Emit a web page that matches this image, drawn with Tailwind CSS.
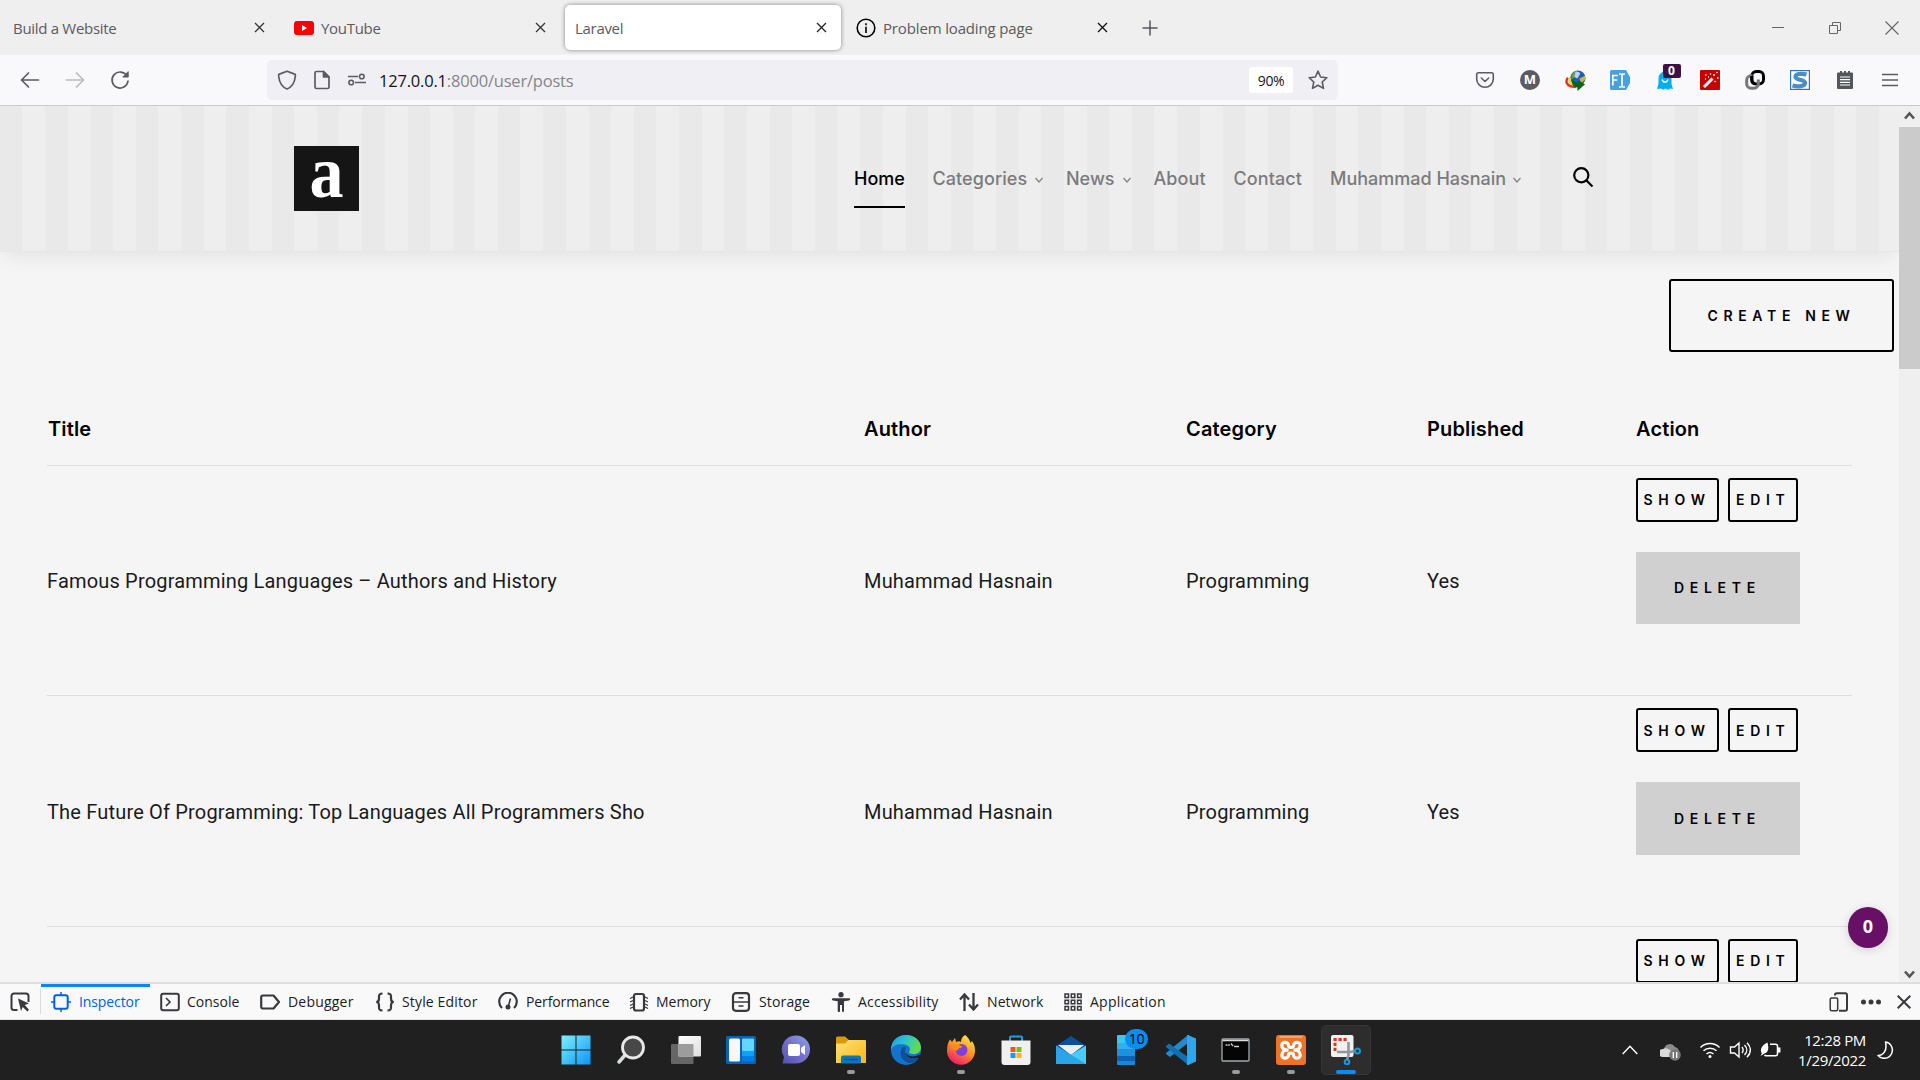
<!DOCTYPE html>
<html lang="en">
<head>
<meta charset="utf-8">
<title>Laravel</title>
<script src="https://cdn.jsdelivr.net/npm/@tailwindcss/browser@4"></script>
</head>
<body class="w-[1920px] h-[1080px] overflow-hidden bg-[#f5f5f5] flex flex-col font-['Open_Sans','Noto_Sans',sans-serif]">

<!-- Tab strip -->
<div class="h-[55px] shrink-0 bg-[#efefef] flex items-start pt-[5px] pl-[2px] text-[15px] tracking-[-0.3px] text-[#5b5b5e]">
  <div class="w-[282px] h-[45px] flex items-center pl-[11px]">
    <span class="grow pt-[2px]">Build a Website</span>
    <svg class="w-[11px] h-[11px] mr-[19px]" viewBox="0 0 11 11" stroke="#333" stroke-width="1.3" fill="none"><path d="M1 1l9 9M10 1l-9 9"/></svg>
  </div>
  <div class="w-[281px] h-[45px] flex items-center pl-[10px]">
    <svg class="w-5 h-[14px] mr-[7px]" viewBox="0 0 20 14"><rect width="20" height="14" rx="3" fill="#f00"/><path d="M8 4l5 3-5 3z" fill="#fff"/></svg>
    <span class="grow pt-[2px]">YouTube</span>
    <svg class="w-[11px] h-[11px] mr-[19px]" viewBox="0 0 11 11" stroke="#333" stroke-width="1.3" fill="none"><path d="M1 1l9 9M10 1l-9 9"/></svg>
  </div>
  <div class="w-[276px] mr-1 h-[45px] flex items-center pl-[10px] bg-white rounded-[5px] shadow-[0_0_4px_rgba(0,0,0,0.45)]">
    <span class="grow pt-[2px]">Laravel</span>
    <svg class="w-[11px] h-[11px] mr-[14px]" viewBox="0 0 11 11" stroke="#222" stroke-width="1.3" fill="none"><path d="M1 1l9 9M10 1l-9 9"/></svg>
  </div>
  <div class="w-[282px] h-[45px] flex items-center pl-[11px]">
    <svg class="w-5 h-5 mr-[7px]" viewBox="0 0 20 20" fill="none" stroke="#000" stroke-width="1.6"><circle cx="10" cy="10" r="8.8"/><path d="M10 8.7V15M10 5.2v2"/></svg>
    <span class="grow pt-[2px] tracking-[-0.15px]">Problem loading page</span>
    <svg class="w-[11px] h-[11px] mr-[19px]" viewBox="0 0 11 11" stroke="#111" stroke-width="1.3" fill="none"><path d="M1 1l9 9M10 1l-9 9"/></svg>
  </div>
  <div class="w-[46px] h-[45px] flex items-center justify-center"><svg class="w-4 h-4" viewBox="0 0 16 16" stroke="#55555f" stroke-width="1.5"><path d="M8 .5v15M.5 8h15"/></svg></div>
  <div class="ml-auto flex h-[45px] items-center">
    <div class="w-[57px] flex justify-center"><svg class="w-3 h-3" viewBox="0 0 12 12" stroke="#666"><path d="M0 5.500h12"/></svg></div>
    <div class="w-[57px] flex justify-center"><svg class="w-3 h-3" viewBox="0 0 12 12" stroke="#666" fill="none"><path d="M.5 3.500h8v8h-8zM3.500 3.500v-3h8v8h-3"/></svg></div>
    <div class="w-[57px] flex justify-center"><svg class="w-[14px] h-[14px]" viewBox="0 0 14 14" stroke="#666" fill="none" stroke-width="1.1"><path d="M.5.5l13 13M13.500.5l-13 13"/></svg></div>
  </div>
</div>

<!-- Navigation toolbar -->
<div class="h-[51px] shrink-0 bg-[#f9f9fb] border-b border-[#c9c9cc] flex items-center">
  <div class="flex w-[267px] pl-[7.5px]">
    <div class="w-[45px] flex justify-center"><svg class="w-5 h-5" viewBox="0 0 20 20" fill="none" stroke="#5b5b66" stroke-width="1.7" stroke-linecap="round" stroke-linejoin="round"><path d="M18.500 10H1.500M8.500 3L1.500 10l7 7"/></svg></div>
    <div class="w-[45px] flex justify-center"><svg class="w-5 h-5" viewBox="0 0 20 20" fill="none" stroke="#bcbcc1" stroke-width="1.7" stroke-linecap="round" stroke-linejoin="round"><path d="M1.500 10h17M11.500 3l7 7-7 7"/></svg></div>
    <div class="w-[45px] flex justify-center"><svg class="w-5 h-5" viewBox="0 0 20 20" fill="none" stroke="#5b5b66" stroke-width="1.7" stroke-linecap="round"><path d="M17 6A8 8 0 1 0 18 11"/><path d="M18.200 2v5h-5z" fill="#5b5b66" stroke-linejoin="round" stroke-width="1"/></svg></div>
  </div>
  <div class="w-[1071px] h-10 rounded-[5px] bg-[#f0f0f4] flex items-center">
    <svg class="w-5 h-5 ml-[10px]" viewBox="0 0 20 20" fill="none" stroke="#5b5b66" stroke-width="1.7" stroke-linejoin="round"><path d="M10 1.200l7.600 2.900c.9 0 .8 1 .7 2.400C17.700 12 15 17 10 19 5 17 2.300 12 1.700 6.500c-.1-1.400-.2-2.400.7-2.400z"/></svg>
    <svg class="w-5 h-5 ml-[15px]" viewBox="0 0 20 20" fill="none" stroke="#5b5b66" stroke-width="1.7" stroke-linejoin="round"><path d="M11.500 1.500H4.500a1.500 1.500 0 0 0-1.500 1.500v14a1.500 1.500 0 0 0 1.500 1.500h11A1.500 1.500 0 0 0 17 17V7z"/><path d="M11.500 1.500V7H17z" fill="#5b5b66"/></svg>
    <svg class="w-5 h-5 ml-[15px]" viewBox="0 0 20 20" fill="none" stroke="#5b5b66" stroke-width="1.6"><path d="M1 6.500h10M8 12.500h11"/><circle cx="14.800" cy="6.500" r="2.300"/><circle cx="4.200" cy="12.500" r="2.300"/></svg>
    <div class="ml-[12px] pt-[3px] text-[16.500px] tracking-[-0.2px] text-[#85858b]"><span class="text-[#15141a]">127.0.0.1</span>:8000/user/posts</div>
    <div class="ml-auto w-11 h-[26px] rounded-[3px] bg-white flex items-center justify-center pt-px text-[14px] tracking-[-0.4px] text-[#15141a]">90%</div>
    <svg class="w-5 h-5 ml-[15px] mr-[10px]" viewBox="0 0 20 20" fill="none" stroke="#5b5b66" stroke-width="1.6" stroke-linejoin="round"><path d="M10 1.200l2.600 5.800 6.300.7-4.700 4.300 1.300 6.400L10 15.200l-5.500 3.200 1.300-6.400L1.100 7.700l6.300-.7z"/></svg>
  </div>
  <div class="flex ml-auto pr-[7.5px] items-center">
    <div class="w-[45px] flex justify-center"><svg class="w-5 h-5" viewBox="0 0 20 20" fill="none" stroke="#5b5b66" stroke-width="1.6" stroke-linecap="round" stroke-linejoin="round"><path d="M3.500 2.800h13a1.800 1.800 0 0 1 1.800 1.800V9a8.300 8.300 0 0 1-16.600 0V4.600a1.800 1.800 0 0 1 1.800-1.800z"/><path d="M6.300 8L10 11.500 13.700 8"/></svg></div>
    <div class="w-[45px] flex justify-center"><div class="w-5 h-5 rounded-full bg-[#5b5b66] text-white text-[13px] font-bold flex items-center justify-center">M</div></div>
    <div class="w-[45px] flex justify-center"><svg class="w-[21px] h-[21px]" viewBox="0 0 22 22"><circle cx="13.500" cy="8.500" r="8" fill="#2857b8"/><path d="M10 2c3-1 5 0 6 2l-3 5-4-2z" fill="#b9d4ee"/><path d="M7 4l4-2-1 5-3 3z" fill="#67a53a"/><path d="M15 9l6-3v4l-4 4z" fill="#c8b83c"/><path d="M3 8c-3 4-1 8 3 9l6 1" stroke="#e52c20" stroke-width="2.500" fill="none"/><path d="M5.500 8c-2 4 0 6 3 7l4 1" stroke="#f5d12c" stroke-width="2.500" fill="none"/><path d="M8 9c0 3 3 4 6 4V11l7 4-8 7v-4C8 18 6 14 8 9z" fill="#0a6418"/></svg></div>
    <div class="w-[45px] flex justify-center"><svg class="w-5 h-5" viewBox="0 0 20 20"><path d="M1.500 0H16l4 7v6l-4 7H1.500A1.500 1.500 0 0 1 0 18.500v-17A1.500 1.500 0 0 1 1.500 0z" fill="#45a1e3"/><path d="M2.800 15.500v-10h5M2.800 10h4.500M9 4h2l1 1 1-1h2M9 17h2l1-1 1 1h2M12 5v11" stroke="#fff" stroke-width="1.700" fill="none"/></svg></div>
    <div class="w-[45px] flex justify-center relative"><svg class="w-5 h-5" viewBox="0 0 20 20"><path d="M3.500 14V8a6.500 6.500 0 0 1 13 0v6l1.500 5-3-.5-2 1.200-2.500-1.200-2.500 1.200-2-1.200-4 .5z" fill="#00aef0"/><path d="M7 9.500c1 3.500 5 3.500 6 0" stroke="#fff" stroke-width="1.300" fill="none"/></svg>
      <div class="absolute left-[20px] -top-[6px] w-[18px] h-[14px] rounded-[2px] bg-[#3d1145] text-white text-[12px] leading-[13px] font-bold text-center">0</div></div>
    <div class="w-[45px] flex justify-center"><svg class="w-5 h-5" viewBox="0 0 20 20"><rect width="20" height="20" rx="1" fill="#c70000"/><path d="M4 17l8.500-8.500" stroke="#fff" stroke-width="3"/><path d="M14 4v2M17 8h1.500M10 3.500l1 1M5 5h1.500M16.500 3l1-1M8 7h1M14.500 11l1 1M5 9h1" stroke="#fff" stroke-width="1.300"/></svg></div>
    <div class="w-[45px] flex justify-center"><svg class="w-5 h-5" viewBox="0 0 20 20" fill="none" stroke-width="3"><rect x="6.800" y="1.500" width="11.700" height="12.500" rx="4.500" stroke="#000"/><path d="M7.500 5.800H6A4.300 4.300 0 0 0 1.700 10v4A4.300 4.300 0 0 0 6 18.300h3a4.300 4.300 0 0 0 4.300-4.300V9.500" stroke="#777"/><path d="M6.800 6v4a4 4 0 0 0 3 3.800" stroke="#000"/></svg></div>
    <div class="w-[45px] flex justify-center"><svg class="w-5 h-5" viewBox="0 0 20 20"><rect x=".6" y=".6" width="18.800" height="18.800" fill="#fff" stroke="#3874ab" stroke-width="1.200"/><path d="M16.500 4.500C11 3 5 4 5.500 7c.5 3.500 9.500 2 9.500 6 0 3.500-7 4-12.500 2.500" stroke="#4a8ec6" stroke-width="4.200" fill="none"/></svg></div>
    <div class="w-[45px] flex justify-center"><svg class="w-5 h-5" viewBox="0 0 20 20"><path d="M3 2.500h2V1h2v1.500h2V1h2v1.500h2V1h2v1.500h2a1 1 0 0 1 1 1V18a1 1 0 0 1-1 1H3a1 1 0 0 1-1-1V3.500a1 1 0 0 1 1-1z" fill="#55555f"/><path d="M5 7h10M5 9.700h10M5 12.400h10M5 15h10" stroke="#fff" stroke-width="1.200"/></svg></div>
    <div class="w-[45px] flex justify-center"><svg class="w-[16px] h-4" viewBox="0 0 16 16" stroke="#5b5b66" stroke-width="1.400"><path d="M0 2.500h16M0 8h16M0 13.500h16"/></svg></div>
  </div>
</div>

<!-- Page viewport -->
<div class="h-[876px] shrink-0 flex overflow-hidden">
  <main class="w-[1899px] h-[876px] overflow-hidden relative">
    <header class="h-[146px] border-b border-[#e7e7e7] bg-[repeating-linear-gradient(90deg,#e9e9e9_0,#e9e9e9_22.4px,#eeeeee_22.4px,#eeeeee_45.280px)] shadow-[0_8px_20px_-4px_rgba(0,0,0,0.08)] flex">
      <svg class="w-[65px] h-[65px] ml-[293.500px] mt-10 overflow-visible" viewBox="0 0 65 65"><rect width="65" height="65" fill="#151515"/><text x="15.500" y="50.500" font-family="Liberation Serif" font-weight="700" font-size="74" fill="#fff" textLength="34" lengthAdjust="spacingAndGlyphs">a</text></svg>
      <nav class="ml-[495.500px] mt-[59px] flex font-['Inter',sans-serif] font-medium text-[18px] leading-7 text-[#7b7b7b]">
        <div class="w-[78.500px]"><span class="inline-block text-black border-b-2 border-black h-[43px]">Home</span></div>
        <div class="w-[133.500px] flex gap-[8px]"><span class="tracking-[0.070px]">Categories</span> <svg class="w-[8px] h-[8px] mt-[11px]" viewBox="0 0 8 8" fill="none" stroke="#858585" stroke-width="1.300"><path d="M.5 2L4 6l3.500-4"/></svg></div>
        <div class="w-[87.500px] flex gap-[8px]">News <svg class="w-[8px] h-[8px] mt-[11px]" viewBox="0 0 8 8" fill="none" stroke="#858585" stroke-width="1.300"><path d="M.5 2L4 6l3.500-4"/></svg></div>
        <div class="w-[80px] tracking-[0.100px]">About</div>
        <div class="w-[96.500px] tracking-[0.100px]">Contact</div>
        <div class="w-[242.500px] flex gap-[7px]">Muhammad Hasnain <svg class="w-[8px] h-[8px] mt-[11px]" viewBox="0 0 8 8" fill="none" stroke="#858585" stroke-width="1.300"><path d="M.5 2L4 6l3.500-4"/></svg></div>
        <svg class="w-5 h-5 mt-[2px]" viewBox="0 0 20 20" fill="none" stroke="#000" stroke-width="2.200"><circle cx="8.300" cy="8.300" r="7.100"/><path d="M13.500 13.500l6 6"/></svg>
      </nav>
    </header>

    <div class="flex justify-end pr-[5px] pt-[27px] font-['Inter',sans-serif]">
      <a class="w-[225px] h-[73px] border-2 border-black rounded-[3px] flex items-center pl-[36.500px] text-[14px] font-semibold tracking-[5.650px] whitespace-nowrap">CREATE NEW</a>
    </div>

    <div class="ml-[47px] w-[1805px]">
      <div class="h-[114px] pl-px pt-[62px] border-b border-[#dedede] grid grid-cols-[816px_322px_241px_209px_1fr] font-['Inter',sans-serif] font-semibold text-[20px] tracking-[0.150px] leading-[30px] text-black">
        <div>Title</div><div>Author</div><div>Category</div><div>Published</div><div>Action</div>
      </div>
      <div class="h-[230px] pl-px border-b border-[#dedede] grid grid-cols-[816px_322px_241px_209px_1fr] items-center font-['Roboto',sans-serif] text-[20px] tracking-[0.180px] text-[#1a1a1a]">
        <div class="-ml-px">Famous Programming Languages – Authors and History</div><div>Muhammad Hasnain</div><div>Programming</div><div>Yes</div>
        <div class="self-start pt-3 font-['Inter',sans-serif] font-semibold text-[14px] tracking-[5.700px] text-black">
          <div class="flex gap-[9px]"><a class="w-[83px] h-11 border-2 border-black rounded-[3px] pl-[5.500px] pb-[2px] flex items-center">SHOW</a><a class="w-[70px] h-11 border-2 border-black rounded-[3px] pl-[6px] pb-[2px] flex items-center">EDIT</a></div>
          <div class="mt-[30px] w-[164px] h-[72px] bg-[#d0d0d0] pl-[38px] pb-[2px] flex items-center">DELETE</div>
        </div>
      </div>
      <div class="h-[231px] pl-px border-b border-[#dedede] grid grid-cols-[816px_322px_241px_209px_1fr] items-center font-['Roboto',sans-serif] text-[20px] tracking-[0.180px] text-[#1a1a1a]">
        <div class="-ml-px pt-[2px]">The Future Of Programming: Top Languages All Programmers Sho</div><div class="pt-[2px]">Muhammad Hasnain</div><div class="pt-[2px]">Programming</div><div class="pt-[2px]">Yes</div>
        <div class="self-start pt-3 font-['Inter',sans-serif] font-semibold text-[14px] tracking-[5.700px] text-black">
          <div class="flex gap-[9px]"><a class="w-[83px] h-11 border-2 border-black rounded-[3px] pl-[5.500px] flex items-center">SHOW</a><a class="w-[70px] h-11 border-2 border-black rounded-[3px] pl-[6px] flex items-center">EDIT</a></div>
          <div class="mt-[30px] w-[164px] h-[73px] bg-[#d0d0d0] pl-[38px] flex items-center">DELETE</div>
        </div>
      </div>
      <div class="pl-[1589px] pt-3 font-['Inter',sans-serif] font-semibold text-[14px] tracking-[5.700px] text-black">
        <div class="flex gap-[9px]"><a class="w-[83px] h-11 border-2 border-black rounded-[3px] pl-[5.500px] pb-[2px] flex items-center">SHOW</a><a class="w-[70px] h-11 border-2 border-black rounded-[3px] pl-[6px] pb-[2px] flex items-center">EDIT</a></div>
      </div>
    </div>

    <!-- Floating tracker counter -->
    <div class="absolute left-[1848px] top-[801px] w-10 h-[41px] rounded-full bg-[#671066] shadow-[0_2px_10px_rgba(0,0,0,0.15)] text-white font-bold text-[18px] flex items-center justify-center pb-[2px]">0</div>
  </main>
  <div class="w-[21px] bg-[#efefef] flex flex-col">
    <div class="h-[21px] flex items-center justify-center pb-[2px]"><svg class="w-[11px] h-[9px]" viewBox="0 0 11 9" fill="none" stroke="#555" stroke-width="2.600"><path d="M1 7.500L5.500 2.500 10 7.500"/></svg></div>
    <div class="h-[242px] bg-[#cbcbcb]"></div>
    <div class="mt-auto h-[18px] flex items-start pt-[6px] justify-center"><svg class="w-[11px] h-[9px]" viewBox="0 0 11 9" fill="none" stroke="#555" stroke-width="2.600"><path d="M1 1.500L5.500 6.500 10 1.500"/></svg></div>
  </div>
</div>

<!-- Developer tools bar -->
<div class="h-[38px] shrink-0 bg-[#f9f9fa] border-t-2 border-b border-t-[#dededf] border-b-[#e0e0e2] flex text-[14px] tracking-[0px] text-[#1c1c20] whitespace-nowrap">
  <div class="w-[41px] flex items-center justify-center pr-[2px] relative"><svg class="w-5 h-5" viewBox="0 0 20 20" fill="none" stroke="#38383d" stroke-width="2"><path d="M7.500 18H4a2.500 2.500 0 0 1-2.500-2.500V4A2.500 2.500 0 0 1 4 1.500h12A2.500 2.500 0 0 1 18.500 4v6"/><path d="M8 6.500l11 5-4.200 1.600 4.200 4.700-1.700 1.700-4.500-4.500L11 19z" fill="#38383d" stroke="none"/></svg><div class="absolute right-0 top-[5px] w-px h-[25px] bg-[#dcdcde]"></div></div>
  <div class="w-[109px] border-t-[3px] border-[#0a84ff] pb-[3px] text-[#0060df] flex items-center pl-[10px] gap-2"><svg class="w-5 h-5" viewBox="0 0 20 20" fill="none" stroke="#0060df" stroke-width="2"><rect x="3.300" y="3.300" width="13.400" height="13.400" rx="2"/><path d="M10 0v3M10 17v3M0 10h3M17 10h3" stroke-width="1.500"/></svg><span class="tracking-[-0.100px]">Inspector</span></div>
  <div class="w-[100px] flex items-center pl-[10px] gap-[7px]"><svg class="w-5 h-5" viewBox="0 0 20 20" fill="none" stroke="#38383d" stroke-width="2"><rect x="1.200" y="1.700" width="17.600" height="16.600" rx="2"/><path d="M6 6l4 4-4 4" stroke-width="1.600"/></svg>Console</div>
  <div class="w-[115px] flex items-center pl-[10px] gap-2"><svg class="w-5 h-5" viewBox="0 0 20 20" fill="none" stroke="#38383d" stroke-width="2.200" stroke-linejoin="round"><path d="M3 3.500h10.500L19 10l-5.500 6.500H3A1.700 1.700 0 0 1 1.200 15V5A1.700 1.700 0 0 1 3 3.500z"/></svg><span class="tracking-[0.200px]">Debugger</span></div>
  <div class="w-[123px] flex items-center pl-[10px] gap-[7px]"><svg class="w-5 h-5" viewBox="0 0 20 20" fill="none" stroke="#38383d" stroke-width="2.200"><path d="M7.500 1.500c-3 0-3.500 1-3.500 3v2c0 2-.8 3.500-2.800 3.500C3.200 10 4 11.500 4 13.500v2c0 2 .5 3 3.500 3M12.500 1.500c3 0 3.500 1 3.500 3v2c0 2 .8 3.500 2.800 3.500-2 0-2.800 1.500-2.800 3.500v2c0 2-.5 3-3.500 3"/></svg><span class="tracking-[0.150px]">Style Editor</span></div>
  <div class="w-[131px] flex items-center pl-[10px] gap-2"><svg class="w-5 h-5" viewBox="0 0 20 20" fill="none" stroke="#38383d" stroke-width="2.200"><path d="M4 16a8.800 8.800 0 1 1 12 0"/><path d="M12.500 6.500l-2 7" stroke-width="1.600"/><circle cx="10" cy="15" r="2.500" fill="#38383d" stroke="none"/></svg><span class="tracking-[-0.120px]">Performance</span></div>
  <div class="w-[102px] flex items-center pl-[10px] gap-[7px]"><svg class="w-5 h-5" viewBox="0 0 20 20" fill="none" stroke="#38383d" stroke-width="2.200"><rect x="5" y="2" width="10" height="16.500" rx="2"/><path d="M4 5l-3 1.500M4 8.500L1 10M4 12l-3 1.500M4 15l-3 1.500M16 5l3 1.500M16 8.500l3 1.500M16 12l3 1.500M16 15l3 1.500" stroke-width="1.300"/></svg>Memory</div>
  <div class="w-[100px] flex items-center pl-[10px] gap-2"><svg class="w-5 h-5" viewBox="0 0 20 20" fill="none" stroke="#38383d" stroke-width="2.200"><rect x="2" y="1.200" width="16" height="17.600" rx="3"/><path d="M2 10h16" stroke-width="1.500"/><path d="M7.500 5.800h5M7.500 14h5" stroke-width="1.600"/></svg><span class="tracking-[0.150px]">Storage</span></div>
  <div class="w-[128px] flex items-center pl-[10px] gap-[7px]"><svg class="w-5 h-5" viewBox="0 0 20 20" fill="#38383d"><circle cx="10" cy="2.700" r="2.600"/><path d="M2 6.200h16a1 1 0 0 1 0 2.300l-5 .8V19a1 1 0 0 1-2 0v-6H9v6a1 1 0 0 1-2.300 0V9.300L2 8.500a1 1 0 0 1 0-2.300z"/></svg><span class="tracking-[0.180px]">Accessibility</span></div>
  <div class="w-[104px] flex items-center pl-[10px] gap-2"><svg class="w-5 h-5" viewBox="0 0 20 20" fill="none" stroke="#38383d" stroke-width="2.300"><path d="M5.500 19V3M1 7.500L5.500 2.500 10 7.500M14.500 1v16M10 12.500l4.500 5 4.500-5"/></svg><span class="tracking-[0.100px]">Network</span></div>
  <div class="w-[114px] flex items-center pl-[10px] gap-[7px]"><svg class="w-5 h-5" viewBox="0 0 20 20" fill="none" stroke="#38383d" stroke-width="1.500"><path d="M2 2h3.500v3.500H2zM8.300 2h3.500v3.500H8.300zM14.600 2h3.500v3.500h-3.500zM2 8.300h3.500v3.500H2zM8.300 8.300h3.500v3.500H8.300zM14.600 8.300h3.500v3.500h-3.500zM2 14.600h3.500v3.500H2zM8.300 14.600h3.500v3.500H8.300zM14.600 14.600h3.500v3.500h-3.500z"/></svg><span class="tracking-[0.250px]">Application</span></div>
  <div class="ml-auto flex items-center pr-[9px]">
    <svg class="w-5 h-5" viewBox="0 0 20 20" fill="none" stroke="#38383d" stroke-width="2"><path d="M6 3.500V3a1.800 1.800 0 0 1 1.800-1.800h8.500A1.800 1.800 0 0 1 18 3v14a1.800 1.800 0 0 1-1.800 1.800H10"/><rect x="1.200" y="6" width="7.500" height="12.800" rx="1.500" stroke-width="1.500"/></svg>
    <svg class="w-5 h-5 ml-[12.500px]" viewBox="0 0 20 20" fill="#38383d"><circle cx="2.500" cy="10" r="2.500"/><circle cx="10" cy="10" r="2.500"/><circle cx="17.500" cy="10" r="2.500"/></svg>
    <svg class="w-[14px] h-[14px] ml-[16px]" viewBox="0 0 14 14" stroke="#38383d" stroke-width="2"><path d="M.7.7l12.600 12.600M13.300.7L.7 13.300"/></svg>
  </div>
</div>

<!-- Taskbar -->
<div class="h-[60px] shrink-0 bg-[#202020] flex items-center">
  <div class="w-[55px] ml-[548px] flex justify-center"><svg class="w-[30px] h-[30px]" viewBox="0 0 30 30"><defs><linearGradient id="w" x1="0" y1="0" x2="1" y2="1"><stop stop-color="#7cf0ff"/><stop offset="1" stop-color="#0d95f5"/></linearGradient></defs><path d="M.5.5H14.500v14H.5zM15.500.5h14v14h-14zM.5 15.500h14v14H.5zM15.500 15.500h14v14h-14z" fill="url(#w)"/></svg></div>
  <div class="w-[55px] flex justify-center"><svg class="w-[30px] h-[30px]" viewBox="0 0 30 30"><path d="M10 19l-7 8" stroke="#d8dde0" stroke-width="3.500" stroke-linecap="round"/><circle cx="17" cy="12.500" r="10.500" fill="#484848" stroke="#e8e8e8" stroke-width="2.800"/></svg></div>
  <div class="w-[55px] flex justify-center"><svg class="w-[30px] h-[30px]" viewBox="0 0 30 30"><defs><linearGradient id="tv" x2="1" y2="1"><stop stop-color="#fff"/><stop offset="1" stop-color="#ddd"/></linearGradient></defs><rect y="9" width="22.500" height="20" rx="1" fill="#666"/><rect x="7.500" y="1" width="22.500" height="20.500" rx="1" fill="url(#tv)"/><rect x="7.500" y="9" width="15" height="12.500" fill="#9c9c9c"/></svg></div>
  <div class="w-[55px] flex justify-center"><svg class="w-[30px] h-[30px]" viewBox="0 0 30 30"><rect y="1" width="30" height="28" rx="1.500" fill="#0c61b3"/><rect x="3" y="3.500" width="11" height="23" rx="1.500" fill="#f7f7f9"/><rect x="16" y="3.500" width="12" height="12.500" rx="1" fill="#62d6ff"/><rect x="16" y="16" width="12" height="5" fill="#0ca2fb"/><rect x="16" y="21" width="12" height="5.500" rx="1" fill="#007ee5"/></svg></div>
  <div class="w-[55px] flex justify-center"><svg class="w-[30px] h-[30px]" viewBox="0 0 30 30"><defs><linearGradient id="ch" x1="1" x2="0" y2="1"><stop stop-color="#8aa5f0"/><stop offset=".5" stop-color="#7770cc"/><stop offset="1" stop-color="#4f50b5"/></linearGradient></defs><path d="M15 .5A14 14 0 1 1 15 28.500H1.500L3 22A14 14 0 0 1 15 .5z" fill="url(#ch)"/><rect x="7" y="9" width="12" height="12" rx="2" fill="#fff"/><path d="M20 13l4-3v10l-4-3z" fill="#fff"/></svg></div>
  <div class="w-[55px] h-[60px] flex justify-center items-center relative"><svg class="w-[30px] h-[30px]" viewBox="0 0 30 30"><defs><linearGradient id="fe" x2="1" y2="1"><stop stop-color="#ffe27a"/><stop offset="1" stop-color="#f8b70e"/></linearGradient></defs><path d="M0 3a1.500 1.500 0 0 1 1.500-1.500H9L13 5v6H0z" fill="#d99a06"/><path d="M0 8.500h9L12.500 5H29a1 1 0 0 1 1 1v22H0z" fill="url(#fe)"/><path d="M5 28.500v-6a2 2 0 0 1 2-2h16a2 2 0 0 1 2 2v6z" fill="#0f74bf"/><path d="M8.500 24.500h13" stroke="#0a4f92" stroke-width="1.500"/></svg><div class="absolute bottom-[6px] w-2 h-1 rounded-full bg-[#9a9a9a]"></div></div>
  <div class="w-[55px] flex justify-center"><svg class="w-[30px] h-[30px]" viewBox="0 0 30 30"><defs><linearGradient id="ed" x2="1" y2=".4"><stop stop-color="#2196e8"/><stop offset=".5" stop-color="#2cc3d0"/><stop offset="1" stop-color="#5fdc4e"/></linearGradient></defs><circle cx="15" cy="15" r="15" fill="#1274cf"/><path d="M0 13C1 5 7 0 15 0c9 0 15 6 15 12.500 0 4-3 6.500-7 6.500-4 0-6-1-4.500-3 1.500-3-1-6-5-6.500C7 8.500 2 10 0 15z" fill="url(#ed)"/><path d="M12 12c-5 5-2 14 6 16 4 .7 8-2 10-6-5 3-13 1-14-4-1-3 0-4 1-5-1-1.500-2-1.500-3-1z" fill="#104f9c"/><path d="M15 13c-1.500 1.500-1.500 5 1 6.500 4 3 9 2 12.500 0l1.500 2v5c-4 0-3-3-3-4-5 2-12 0-13-5-.4-2 0-3.500 1-4.500z" fill="#202020"/></svg></div>
  <div class="w-[55px] h-[60px] flex justify-center items-center relative"><svg class="w-[30px] h-[30px]" viewBox="0 0 30 30"><defs><linearGradient id="ff" x1=".8" y1="0" x2=".3" y2="1"><stop stop-color="#ffe94a"/><stop offset=".45" stop-color="#ff9a20"/><stop offset="1" stop-color="#f5156c"/></linearGradient></defs><path d="M19 0c4 3 5 6 5.500 8L26 6c2 3 3 6 3 9.500A14 14 0 0 1 1 16C1 11 2 7 4 4.500L6 7l3-4 1 4c2-1 4-1 5 0 0-3 1-5 4-7z" fill="url(#ff)"/><circle cx="15.500" cy="15" r="6" fill="#7e3fe0"/><path d="M5 10c5-1 8-1 12 2-3 1-5 1-6 4-3-1-5-3-6-6z" fill="#ff8a1c"/></svg><div class="absolute bottom-[6px] w-2 h-1 rounded-full bg-[#9a9a9a]"></div></div>
  <div class="w-[55px] flex justify-center"><svg class="w-[30px] h-[30px]" viewBox="0 0 30 30"><path d="M9 6V2.500A1 1 0 0 1 10 1.500h10a1 1 0 0 1 1 1V6" fill="none" stroke="#1e9fe3" stroke-width="2"/><path d="M.5 5.500h29V27a3 3 0 0 1-3 3h-23a3 3 0 0 1-3-3z" fill="#f0f0f0"/><path d="M9.500 12h5v5h-5z" fill="#f35325"/><path d="M15.500 12h5v5h-5z" fill="#81bc06"/><path d="M9.500 18h5v5h-5z" fill="#05a6f0"/><path d="M15.500 18h5v5h-5z" fill="#ffba08"/></svg></div>
  <div class="w-[55px] flex justify-center"><svg class="w-[30px] h-[30px]" viewBox="0 0 30 30"><path d="M0 11L15 1l15 10v8H0z" fill="#0c4f9a"/><path d="M2 10h26L15 20z" fill="#eee"/><path d="M30 10.500L0 29h30z" fill="#46cbfa"/><path d="M0 10.500L30 29H0z" fill="#2aa5ea"/></svg></div>
  <div class="w-[55px] h-[60px] flex justify-center items-center relative"><svg class="w-[30px] h-[30px]" viewBox="0 0 30 30"><path d="M6 1a1 1 0 0 1 1-1h16a1 1 0 0 1 1 1v10H6z" fill="#3cc5f5"/><path d="M6 8h18v7H6z" fill="#30b1ee"/><path d="M6 14h18v8H6z" fill="#1b91df"/><path d="M6 21h18v8a1 1 0 0 1-1 1H7a1 1 0 0 1-1-1z" fill="#0c62b5"/><path d="M6 26h18v3a1 1 0 0 1-1 1H7a1 1 0 0 1-1-1z" fill="#1887da"/></svg><div class="absolute left-[27px] top-[9px] w-[23px] h-5 rounded-full bg-[#0a8cf5] text-black text-[14.500px] tracking-[-0.500px] leading-5 text-center">10</div></div>
  <div class="w-[55px] flex justify-center"><svg class="w-[30px] h-[30px]" viewBox="0 0 30 30"><path d="M22 0v8L4 22 0 19v-1z" fill="#2489ca"/><path d="M0 11l3-2.500L22 22v8L0 12z" fill="#1070b3"/><path d="M22 0l8 3.500v23L22 30c1 0 1-1 1-2V2c0-1 0-2-1-2z" fill="#2da6ee"/><path d="M21 0l2 0v30l-2 0z" fill="#2da6ee"/></svg></div>
  <div class="w-[55px] h-[60px] flex justify-center items-center relative"><svg class="w-[30px] h-[30px]" viewBox="0 0 30 30"><rect x="1" y="4" width="27" height="22" rx="1" fill="#050505" stroke="#a5abb0" stroke-width="1.300"/><path d="M1.500 5.500h26" stroke="#dcdcdc" stroke-width="1.500"/><path d="M4.500 10h2M8 9v2M10 8.500l2 2.500M13 11.500h5" stroke="#ccc" stroke-width="1.300"/></svg><div class="absolute bottom-[6px] w-2 h-1 rounded-full bg-[#9a9a9a]"></div></div>
  <div class="w-[55px] h-[60px] flex justify-center items-center relative"><svg class="w-[30px] h-[30px]" viewBox="0 0 30 30"><rect width="30" height="30" rx="3" fill="#ee7326"/><path d="M3.500 2h23" stroke="#f7b37f" stroke-width="1.500"/><path d="M12.500 15C8 15 5.800 13 5.800 10.500 5.800 6 12.500 6.500 12.500 10.500c0 2.500 5 2.500 5 0C17.500 6.500 24.200 6 24.200 10.500c0 2.500-2.200 4.500-6.700 4.500 4.500 0 6.700 2.500 6.700 5 0 4.500-6.700 4-6.700 0 0-2.500-5-2.500-5 0 0 4-6.700 4.500-6.700 0 0-2.500 2.200-5 6.700-5z" fill="none" stroke="#fff" stroke-width="3.200"/></svg><div class="absolute bottom-[6px] w-2 h-1 rounded-full bg-[#9a9a9a]"></div></div>
  <div class="w-[50px] ml-[3px] h-[50px] rounded-[5px] bg-[#2d2d2d] border border-[#363636] flex justify-center items-center relative"><svg class="w-[30px] h-[30px]" viewBox="0 0 30 30" fill="none"><rect width="22.500" height="22" rx="2" fill="#f1f1f3"/><path d="M4 16V4.500h13" stroke="#d63a13" stroke-width="3" stroke-dasharray="3.200 1.800"/><path d="M17.500 7v13l-1.500 5M6 17h13l5-1" stroke="#8f969c" stroke-width="2.600"/><circle cx="26.500" cy="16" r="2.500" stroke="#1c97dd" stroke-width="2"/><circle cx="16" cy="27" r="2.300" stroke="#1c97dd" stroke-width="2"/></svg><div class="absolute bottom-0 w-5 h-1 rounded-full bg-[#0a8cf5]"></div></div>

  <div class="ml-auto flex items-center text-white">
    <svg class="w-4 h-[10px]" viewBox="0 0 16 10" fill="none" stroke="#fff" stroke-width="1.400"><path d="M.7 9L8 1.200 15.300 9"/></svg>
    <svg class="w-[21px] h-[18px] ml-[22px] mt-1" viewBox="0 0 21 18"><path d="M4 6a6 6 0 0 1 11-2 5 5 0 0 1 4 6H4z" fill="#8c8c8c"/><path d="M3 14a4 4 0 0 1 0-8c3-2 6 0 8 2v6z" fill="#d9d9d9"/><circle cx="15" cy="12" r="5.800" fill="#777"/><path d="M13.300 9v6M16.700 9v6" stroke="#fff" stroke-width="1.300"/></svg>
    <svg class="w-[22px] h-5 ml-[18.500px]" viewBox="0 0 22 20" fill="none" stroke="#fff" stroke-width="1.500"><path d="M1.500 7.500a13.500 13.500 0 0 1 19 0M4.500 10.800a9.500 9.500 0 0 1 13 0M7.500 14a5.500 5.500 0 0 1 7 0"/><circle cx="11" cy="16.500" r="1.500" fill="#fff" stroke="none"/></svg>
    <svg class="w-[22px] h-5 ml-[8px]" viewBox="0 0 22 20" fill="none" stroke="#fff" stroke-width="1.400"><path d="M1.500 7h4L10 3v14l-4.500-4h-4zM13 7c1.500 2 1.500 4 0 6M15.500 5c3 3 3 7 0 10M18 2.800c4.500 4.500 4.500 9.900 0 14.400"/></svg>
    <svg class="w-[22px] h-5 ml-[8px]" viewBox="0 0 22 20" fill="none" stroke="#fff" stroke-width="1.500"><path d="M11 4.200h5.500a2 2 0 0 1 2 2v7.600a2 2 0 0 1-2 2H7a2 2 0 0 1-1.500-.8"/><path d="M19.500 8.200h1.200v3.600h-1.200z" fill="#fff"/><path d="M1.500 16l1.300-2.500C.5 9.500 3 5 8.500 2.500 9.500 7 10.500 12.500 5 13.800z" fill="#fff" stroke="none"/></svg>
    <div class="w-[85px] text-right text-[15px] leading-5 tracking-[-0.35px] whitespace-nowrap">12:28 PM<br>1/29/2022</div>
    <svg class="w-[18px] h-[18px] ml-[11px] mr-[25px]" viewBox="0 0 18 18" fill="none" stroke="#fff" stroke-width="1.500" stroke-linejoin="round"><path d="M8.500 1a8.200 8.200 0 1 1-7.500 13.500C6 14.500 10.500 10 8.500 1z"/></svg>
  </div>
</div>
</body>
</html>
